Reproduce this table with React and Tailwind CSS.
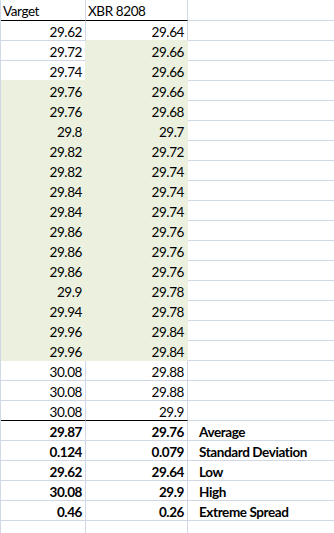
const colA = ["29.62","29.72","29.74","29.76","29.76","29.8","29.82","29.82","29.84","29.84","29.86","29.86","29.86","29.9","29.94","29.96","29.96","30.08","30.08","30.08"];
const colB = ["29.64","29.66","29.66","29.66","29.68","29.7","29.72","29.74","29.74","29.74","29.76","29.76","29.76","29.78","29.78","29.84","29.84","29.88","29.88","29.9"];

const stats = [
  ["29.87", "29.76", "Average"],
  ["0.124", "0.079", "Standard Deviation"],
  ["29.62", "29.64", "Low"],
  ["30.08", "29.9", "High"],
  ["0.46", "0.26", "Extreme Spread"],
];

const greenA = (i) => i >= 3 && i <= 16;
const greenB = (i) => i >= 1 && i <= 16;

const Row = ({ a, b, c, fillA, fillB, lineA, lineB, nextA, nextB, bold }) => {
  // gridline colour under each cell: black rule, hidden by fill, or plain grid
  const bottomA = lineA ? "border-b-black" : fillA || nextA ? "border-b-[#ebf1de]" : "border-b-[#d0d7e5]";
  const bottomB = lineB ? "border-b-black" : fillB || nextB ? "border-b-[#ebf1de]" : "border-b-[#d0d7e5]";
  const rightA = fillA || fillB ? "border-r-[#ebf1de]" : "border-r-[#d0d7e5]";
  const rightB = fillB ? "border-r-[#ebf1de]" : "border-r-[#d0d7e5]";
  return (
    <div className={`flex h-[20px] ${bold ? "font-bold" : ""}`}>
      <div className={`w-[85px] shrink-0 border-r border-b ${rightA} ${bottomA} ${fillA ? "bg-[#ebf1de]" : "bg-white"} flex items-end justify-end pr-[3px] pb-px`}>
        {a}
      </div>
      <div className={`w-[102px] shrink-0 border-r border-b ${rightB} ${bottomB} ${fillB ? "bg-[#ebf1de]" : "bg-white"} flex items-end justify-end pr-[3px] pb-px`}>
        {b}
      </div>
      <div className="flex-1 border-b border-b-[#d0d7e5] flex items-end pl-[11px] pb-px whitespace-nowrap">
        {c}
      </div>
    </div>
  );
};

export default function App() {
  return (
    <div className="w-[334px] h-[533px] overflow-hidden bg-white border-l border-[#d0d7e5] font-['Lato',sans-serif] text-[13.5px] tracking-[-0.4px] leading-none text-black">
      {/* header */}
      <div className="flex h-[21px]">
        <div className="w-[85px] shrink-0 border-r border-b border-r-[#d0d7e5] border-b-black flex items-end pl-[2px] pb-[2px]">Varget</div>
        <div className="w-[102px] shrink-0 border-r border-b border-r-[#d0d7e5] border-b-black flex items-end pl-[2px] pb-[2px]">XBR 8208</div>
        <div className="flex-1 border-b border-b-[#d0d7e5]"></div>
      </div>

      {colA.map((a, i) => (
        <Row
          key={i}
          a={a}
          b={colB[i]}
          fillA={greenA(i)}
          fillB={greenB(i)}
          nextA={greenA(i + 1)}
          nextB={greenB(i + 1)}
          lineA={i === colA.length - 1}
          lineB={i === colA.length - 1}
        />
      ))}

      {stats.map(([a, b, c], i) => (
        <Row key={"s" + i} a={a} b={b} c={c} bold />
      ))}

      <Row a="" b="" c="" />
    </div>
  );
}
